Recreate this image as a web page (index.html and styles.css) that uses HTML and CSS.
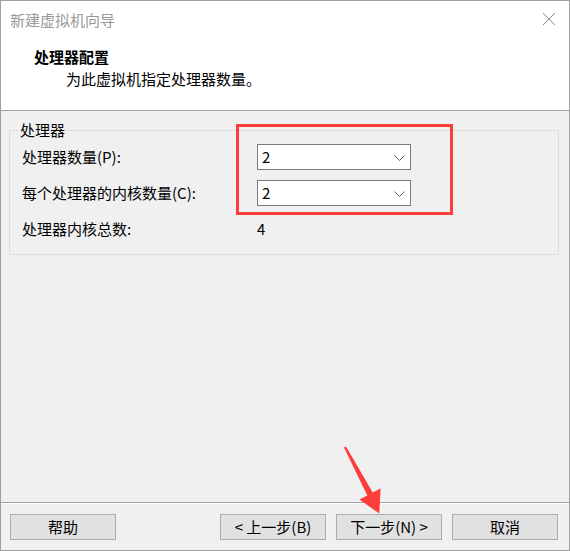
FILE: index.html
```html
<!DOCTYPE html>
<html lang="zh-CN">
<head>
<meta charset="utf-8">
<title>新建虚拟机向导</title>
<link rel="stylesheet" href="styles.css">
</head>
<body>
<div class="window">
  <div class="top">
    <div class="titlebar">
      <span class="title">新建虚拟机向导</span>
      <svg class="close" width="14" height="14" viewBox="0 0 14 14"><path d="M1 1 L13 13 M13 1 L1 13" stroke="#8a8a8a" stroke-width="1" fill="none"/></svg>
    </div>
    <div class="header">
      <div class="h-title">处理器配置</div>
      <div class="h-sub">为此虚拟机指定处理器数量。</div>
    </div>
  </div>
  <div class="main">
    <fieldset class="group">
      <legend class="legend">处理器</legend>
      <div class="grid">
        <div class="label">处理器数量(P):</div>
        <div class="combo"><span class="val">2</span><svg class="chev" width="11" height="6" viewBox="0 0 11 6"><path d="M0.5 0.5 L5.5 5.5 L10.5 0.5" stroke="#606060" stroke-width="1" fill="none"/></svg></div>
        <div class="label">每个处理器的内核数量(C):</div>
        <div class="combo"><span class="val">2</span><svg class="chev" width="11" height="6" viewBox="0 0 11 6"><path d="M0.5 0.5 L5.5 5.5 L10.5 0.5" stroke="#606060" stroke-width="1" fill="none"/></svg></div>
        <div class="label">处理器内核总数:</div>
        <div class="total">4</div>
      </div>
    </fieldset>
  </div>
  <div class="footer">
    <button class="btn">帮助</button>
    <div class="spacer"></div>
    <button class="btn">&lt; 上一步(B)</button>
    <button class="btn">下一步(N) &gt;</button>
    <button class="btn">取消</button>
  </div>
  <div class="redbox"></div>
  <svg class="arrow" width="570" height="551" viewBox="0 0 570 551">
    <polygon points="344,447.5 346,446.5 372.7,492.6 380.6,488.5 379.3,513.5 359.4,499.5 367.3,495.4" fill="#fd3c3c"/>
  </svg>
</div>
</body>
</html>
```

FILE: styles.css
```css
html, body {
  margin: 0;
  padding: 0;
}
body {
  font-family: "Noto Sans CJK SC", "Noto Sans", sans-serif;
  font-size: 15px;
  color: #000;
}
.window {
  position: relative;
  width: 570px;
  height: 551px;
  box-sizing: border-box;
  border: 1px solid #a0a0a0;
  background: #f0f0f0;
  display: flex;
  flex-direction: column;
  overflow: hidden;
}
.top {
  background: #fff;
  height: 110px;
  box-sizing: border-box;
  border-bottom: 1px solid #a0a0a0;
}
.titlebar {
  height: 38px;
  display: flex;
  align-items: center;
  justify-content: space-between;
  padding: 0 13px 0 9px;
}
.title {
  color: #999;
  line-height: 38px;
}
.close {
  display: block;
  margin-top: -2px;
}
.header {
  padding: 7px 0 0 33px;
}
.h-title {
  font-weight: bold;
  line-height: 22px;
}
.h-sub {
  line-height: 22px;
  padding-left: 32px;
}
.main {
  flex: 1;
}
.group {
  margin: 9px 10px 0 8px;
  padding: 4px 0 12px 12px;
  border: 1px solid #dcdcdc;
  min-width: 0;
}
.legend {
  margin-left: -3px;
  padding: 0 1px;
  line-height: 20px;
}
.grid {
  display: grid;
  grid-template-columns: 235px 154px;
  grid-auto-rows: 26px;
  row-gap: 10px;
  align-items: center;
}
.label {
  line-height: 20px;
}
.combo {
  height: 26px;
  box-sizing: border-box;
  border: 1px solid #7a7a7a;
  background: #fff;
  display: flex;
  align-items: center;
  justify-content: space-between;
  padding: 0 5px 0 4px;
}
.val {
  line-height: 20px;
}
.chev {
  display: block;
  margin-top: 1px;
}
.total {
  line-height: 20px;
}
.footer {
  border-top: 1px solid #a0a0a0;
  box-shadow: inset 0 1px 0 #fff;
  padding: 11px 11px 10px 9px;
  display: flex;
  gap: 10px;
}
.spacer {
  flex: 1;
}
.btn {
  width: 106px;
  height: 26px;
  box-sizing: border-box;
  border: 1px solid #adadad;
  background: #e1e1e1;
  font-family: "Noto Sans CJK SC", "Noto Sans", sans-serif;
  font-size: 15px;
  color: #000;
  padding: 0;
  line-height: 22px;
}
.redbox {
  position: absolute;
  left: 235px;
  top: 123px;
  width: 217px;
  height: 91px;
  box-sizing: border-box;
  border: 3px solid #fd3c3c;
}
.arrow {
  position: absolute;
  left: -1px;
  top: -1px;
  pointer-events: none;
}
```
